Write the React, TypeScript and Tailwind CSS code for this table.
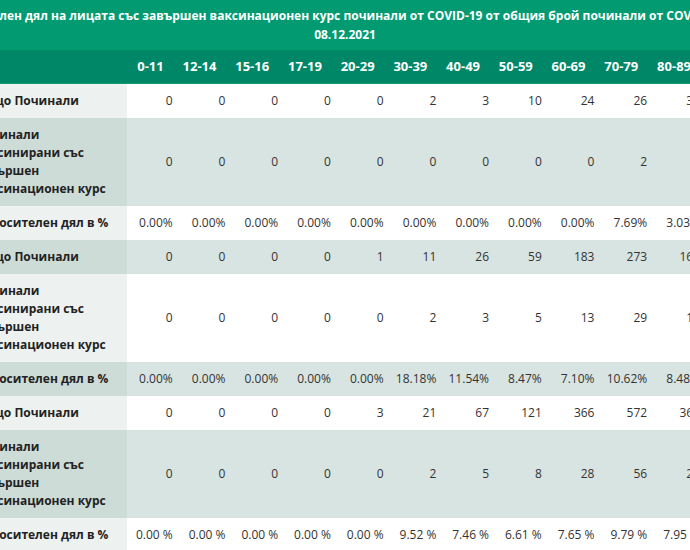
import React from "react";

const AGES = ["0-11", "12-14", "15-16", "17-19", "20-29", "30-39", "40-49", "50-59", "60-69", "70-79", "80-89"];

type Group = { total: string[]; vacc: string[]; pct: string[] };

const GROUPS: Group[] = [
  {
    total: ["0", "0", "0", "0", "0", "2", "3", "10", "24", "26", "33"],
    vacc: ["0", "0", "0", "0", "0", "0", "0", "0", "0", "2", "1"],
    pct: ["0.00%", "0.00%", "0.00%", "0.00%", "0.00%", "0.00%", "0.00%", "0.00%", "0.00%", "7.69%", "3.03%"],
  },
  {
    total: ["0", "0", "0", "0", "1", "11", "26", "59", "183", "273", "165"],
    vacc: ["0", "0", "0", "0", "0", "2", "3", "5", "13", "29", "14"],
    pct: ["0.00%", "0.00%", "0.00%", "0.00%", "0.00%", "18.18%", "11.54%", "8.47%", "7.10%", "10.62%", "8.48%"],
  },
  {
    total: ["0", "0", "0", "0", "3", "21", "67", "121", "366", "572", "365"],
    vacc: ["0", "0", "0", "0", "0", "2", "5", "8", "28", "56", "29"],
    pct: ["0.00 %", "0.00 %", "0.00 %", "0.00 %", "0.00 %", "9.52 %", "7.46 %", "6.61 %", "7.65 %", "9.79 %", "7.95 %"],
  },
];

function Row({ label, values, shaded, tall }: { label: React.ReactNode; values: string[]; shaded: boolean; tall?: boolean }) {
  const cell = shaded ? "bg-[#d8e4e1]" : "bg-white";
  const head = shaded ? "bg-[#cedcd8]" : "bg-[#edf2f0]";
  return (
    <tr className={tall ? "h-[88px]" : "h-[34px]"}>
      <th className={`${head} pl-[5px] py-[8px] text-left font-bold text-[12px] leading-[18px] text-[#222] whitespace-nowrap align-middle`}>
        {label}
      </th>
      {values.map((v, i) => (
        <td key={i} className={`${cell} pr-[7px] text-right text-[12px] leading-[18px] text-[#333] whitespace-nowrap align-middle`}>
          {v}
        </td>
      ))}
    </tr>
  );
}

export default function App() {
  return (
    <div className="w-[690px] h-[550px] overflow-hidden bg-white font-['Open_Sans',sans-serif]">
      <div className="bg-[#029b71] text-white font-bold text-[12px] leading-[19px] py-[6px] flex flex-col items-center">
        <span className="whitespace-nowrap">
          Относителен дял на лицата със завършен ваксинационен курс починали от COVID-19 от общия брой починали от COVID-19 към
        </span>
        <span className="whitespace-nowrap">08.12.2021</span>
      </div>
      <table className="table-fixed border-collapse -ml-[30px] w-[737px]">
        <colgroup>
          <col className="w-[156px]" />
          {AGES.map((a) => (
            <col key={a} className="w-[52.4px]" />
          ))}
        </colgroup>
        <thead>
          <tr className="h-[33px] bg-[#008767] border-b border-[#139c74]">
            <th />
            {AGES.map((a) => (
              <th key={a} className="pr-[16px] text-right text-white font-bold text-[13px] whitespace-nowrap">
                {a}
              </th>
            ))}
          </tr>
        </thead>
        <tbody>
          {GROUPS.map((g, i) => {
            const odd = i % 2 === 1;
            return (
              <React.Fragment key={i}>
                <Row label="Общо Починали" values={g.total} shaded={odd} />
                <Row
                  label={
                    <>
                      Починали
                      <br />
                      ваксинирани със
                      <br />
                      завършен
                      <br />
                      ваксинационен курс
                    </>
                  }
                  values={g.vacc}
                  shaded={!odd}
                  tall
                />
                <Row label="Относителен дял в %" values={g.pct} shaded={odd} />
              </React.Fragment>
            );
          })}
        </tbody>
      </table>
    </div>
  );
}
